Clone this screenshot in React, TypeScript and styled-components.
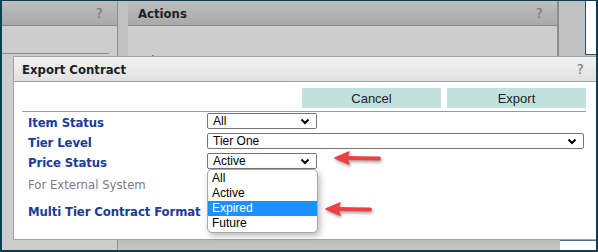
import styled, { createGlobalStyle } from 'styled-components';

const GlobalStyle = createGlobalStyle`
  html, body {
    margin: 0;
    padding: 0;
    background: #ffffff;
  }
  body {
    font-family: "DejaVu Sans Condensed", "DejaVu Sans", Verdana, sans-serif;
  }
`;

const Frame = styled.div`
  position: relative;
  width: 598px;
  height: 252px;
  box-sizing: border-box;
  border: solid #0e3c52;
  border-width: 1px 2px 2px 2px;
  display: flex;
  flex-direction: column;
  overflow: hidden;
`;

const Columns = styled.div`
  flex: 1;
  display: grid;
  grid-template-columns: 116px 10px 430px 27px 1fr;
`;

const Panel = styled.div`
  display: flex;
  flex-direction: column;
  border-right: 1px solid #8e8e8e;
  background: #cdcdcd;
`;

const PanelHeader = styled.div`
  height: 25px;
  box-sizing: border-box;
  flex: none;
  display: flex;
  align-items: center;
  justify-content: space-between;
  padding: 0 14px 0 10px;
  background: linear-gradient(#bebebe, #a9a9a9);
  border-bottom: 1px solid #8a8a8a;
  font-weight: bold;
  font-size: 13px;
  color: #222;
`;

const Help = styled.span`
  font-family: "DejaVu Sans", Verdana, sans-serif;
  font-weight: normal;
  font-size: 14px;
  color: #777;
`;

const PanelBody = styled.div`
  flex: 1;
  padding: 27px 8px 0 0;
`;

const SubRule = styled.div`
  height: 1px;
  background: #8e8e8e;
`;

const ActionsBody = styled.div`
  flex: 1;
  padding: 27px 0 0 15px;
  font-size: 13px;
  color: #2a5db0;
`;

const Gutter = styled.div`
  background: #c0c0c0;
`;

const Side = styled.div`
  background: #c0c0c0;
  border-left: 1px solid #8e8e8e;
`;

const Strip = styled.div`
  background: #c0c0c0;
  display: flex;
  flex-direction: column;
`;

const StripTop = styled.div`
  height: 53px;
  background: #ffffff;
  border-left: 1px solid #2c5470;
  border-bottom: 1px solid #2c5470;
`;

const Footer = styled.div`
  height: 10px;
  flex: none;
  display: grid;
  grid-template-columns: 116px 442px 1fr;
`;

const FootLeft = styled.div`
  background: #cdcdcd;
  border-right: 1px solid #8e8e8e;
`;

const FootMid = styled.div`
  background: linear-gradient(#bdbdbd, #c6c6c6);
`;

const FootRight = styled.div`
  background: #ffffff;
  border-top: 1px solid #4a7396;
`;

const Dialog = styled.div`
  position: absolute;
  left: 11px;
  top: 55px;
  right: 0;
  bottom: 10px;
  box-sizing: border-box;
  border: 1px solid #a3a3a3;
  border-right: none;
  background: #ffffff;
  display: flex;
  flex-direction: column;
`;

const DialogTitle = styled.div`
  height: 25px;
  box-sizing: border-box;
  display: flex;
  align-items: center;
  justify-content: space-between;
  padding: 0 12px 0 8px;
  background: linear-gradient(#f3f3f3, #e1e1e1);
  border-bottom: 1px solid #a3a3a3;
  font-weight: bold;
  font-size: 13px;
  color: #1e1e1e;
`;

const DialogBody = styled.div`
  padding: 6px 10px 0 8px;
`;

const ButtonRow = styled.div`
  display: flex;
  justify-content: flex-end;
  gap: 6px;
`;

const Button = styled.button`
  width: 139px;
  height: 20px;
  border: none;
  padding: 0;
  background: #c1e1df;
  font-family: "Liberation Sans", Arial, sans-serif;
  font-size: 13px;
  color: #222;
`;

const Divider = styled.div`
  height: 1px;
  margin-top: 3px;
  background: #9a9a9a;
`;

const Form = styled.div`
  display: grid;
  grid-template-columns: 185px 1fr;
  grid-template-rows: 20px 20px 20px 25px 28px;
`;

const Label = styled.div<{ $muted?: boolean }>`
  padding-left: 6px;
  display: flex;
  align-items: center;
  font-size: 13px;
  font-weight: ${(p) => (p.$muted ? 'normal' : 'bold')};
  letter-spacing: ${(p) => (p.$muted ? '0' : '-0.1px')};
  color: ${(p) => (p.$muted ? '#7b7b7b' : '#1a3c96')};
  white-space: nowrap;
`;

const Cell = styled.div``;

const SelectBox = styled.div<{ $wide?: boolean }>`
  margin-top: 1px;
  width: ${(p) => (p.$wide ? 'calc(100% - 2px)' : '110px')};
  height: 16px;
  box-sizing: border-box;
  border: 1px solid #767676;
  border-radius: 2px;
  display: flex;
  align-items: center;
  justify-content: space-between;
  padding: 0 6px 0 5px;
  font-family: "Liberation Sans", Arial, sans-serif;
  font-size: 12px;
  color: #000;
`;

const OptionList = styled.div`
  position: absolute;
  left: 193px;
  top: 112px;
  width: 111px;
  box-sizing: border-box;
  padding: 1px 0;
  border: 1px solid #a9a9a9;
  border-radius: 5px;
  background: #ffffff;
  box-shadow: 2px 3px 6px rgba(0, 0, 0, 0.28);
  font-family: "Liberation Sans", Arial, sans-serif;
  font-size: 12px;
`;

const Option = styled.div<{ $active?: boolean }>`
  height: 15px;
  line-height: 15px;
  padding-left: 4px;
  background: ${(p) => (p.$active ? '#1e8fff' : 'transparent')};
  color: ${(p) => (p.$active ? '#ffffff' : '#000000')};
`;

const Arrow = styled.svg<{ $left: number; $top: number }>`
  position: absolute;
  left: ${(p) => p.$left}px;
  top: ${(p) => p.$top}px;
  filter: drop-shadow(1px 2px 1.5px rgba(0, 0, 0, 0.35));
`;

function Chevron() {
  return (
    <svg width="10" height="7" viewBox="0 0 10 7">
      <path d="M1.5 1.5 L5 5 L8.5 1.5" fill="none" stroke="#000" strokeWidth="2" />
    </svg>
  );
}

function RedArrow({ left, top, length }: { left: number; top: number; length: number }) {
  return (
    <Arrow $left={left} $top={top} width={length + 4} height="18" viewBox={`0 0 ${length + 4} 18`}>
      <line x1="12" y1="8" x2={length} y2="8.5" stroke="#ef3f45" strokeWidth="4" strokeLinecap="round" />
      <path d="M1 8 L15 2 L12.5 8 L15 14 Z" fill="#ef3f45" stroke="#ef3f45" strokeWidth="1.5" strokeLinejoin="round" />
    </Arrow>
  );
}

export default function App() {
  return (
    <>
      <GlobalStyle />
      <Frame>
        <Columns>
          <Panel>
            <PanelHeader>
              <span />
              <Help>?</Help>
            </PanelHeader>
            <PanelBody>
              <SubRule />
            </PanelBody>
          </Panel>
          <Gutter />
          <Panel>
            <PanelHeader>
              <span>Actions</span>
              <Help>?</Help>
            </PanelHeader>
            <ActionsBody>Alerts</ActionsBody>
          </Panel>
          <Side />
          <Strip>
            <StripTop />
          </Strip>
        </Columns>
        <Footer>
          <FootLeft />
          <FootMid />
          <FootRight />
        </Footer>

        <Dialog>
          <DialogTitle>
            <span>Export Contract</span>
            <Help>?</Help>
          </DialogTitle>
          <DialogBody>
            <ButtonRow>
              <Button>Cancel</Button>
              <Button>Export</Button>
            </ButtonRow>
            <Divider />
            <Form>
              <Label>Item Status</Label>
              <Cell>
                <SelectBox>
                  All
                  <Chevron />
                </SelectBox>
              </Cell>
              <Label>Tier Level</Label>
              <Cell>
                <SelectBox $wide>
                  Tier One
                  <Chevron />
                </SelectBox>
              </Cell>
              <Label>Price Status</Label>
              <Cell>
                <SelectBox>
                  Active
                  <Chevron />
                </SelectBox>
              </Cell>
              <Label $muted>For External System</Label>
              <Cell />
              <Label>Multi Tier Contract Format</Label>
              <Cell />
            </Form>
          </DialogBody>
          <OptionList>
            <Option>All</Option>
            <Option>Active</Option>
            <Option $active>Expired</Option>
            <Option>Future</Option>
          </OptionList>
          <RedArrow left={320} top={93} length={45} />
          <RedArrow left={311} top={144} length={45} />
        </Dialog>
      </Frame>
    </>
  );
}
